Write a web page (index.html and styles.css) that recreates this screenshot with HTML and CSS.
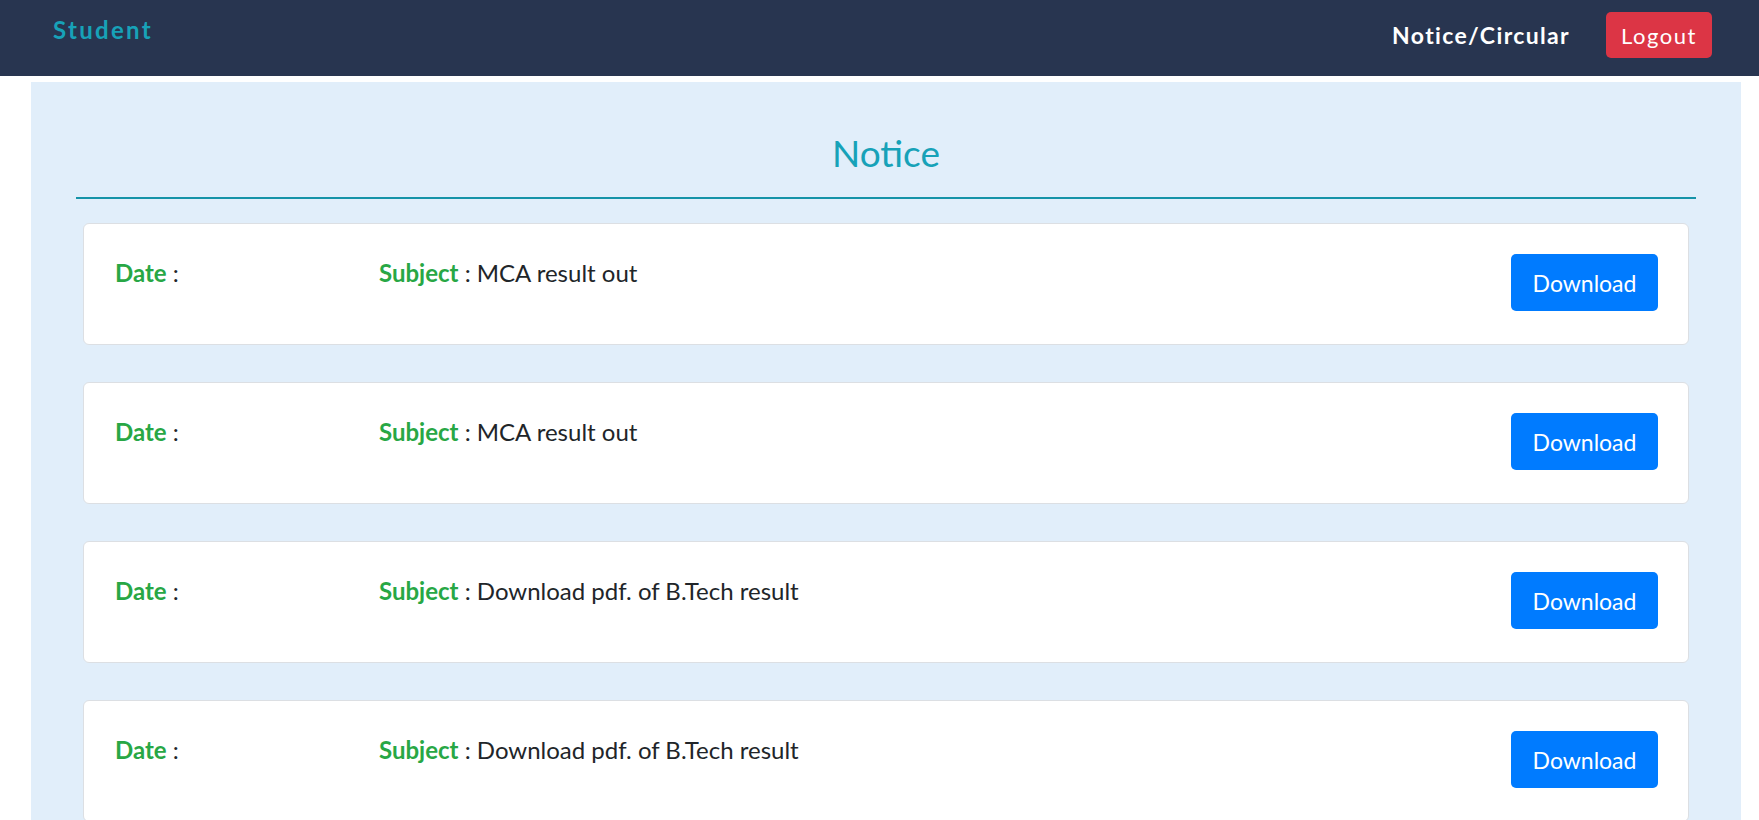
FILE: index.html
```html
<!DOCTYPE html>
<html lang="en">
<head>
<meta charset="utf-8">
<title>Student - Notice</title>
<link rel="stylesheet" href="styles.css">
</head>
<body>
<nav class="navbar">
  <a class="brand" href="#">Student</a>
  <div class="nav-right">
    <a class="nav-link" href="#">Notice/Circular</a>
    <a class="btn-logout" href="#">Logout</a>
  </div>
</nav>
<main class="panel">
  <h1 class="title">Notice</h1>
  <hr class="rule">
  <div class="card">
    <div class="col-date"><span class="label">Date</span> :</div>
    <div class="col-subject"><span class="label">Subject</span> : MCA result out</div>
    <a class="btn-download" href="#">Download</a>
  </div>
  <div class="card">
    <div class="col-date"><span class="label">Date</span> :</div>
    <div class="col-subject"><span class="label">Subject</span> : MCA result out</div>
    <a class="btn-download" href="#">Download</a>
  </div>
  <div class="card">
    <div class="col-date"><span class="label">Date</span> :</div>
    <div class="col-subject"><span class="label">Subject</span> : Download pdf. of B.Tech result</div>
    <a class="btn-download" href="#">Download</a>
  </div>
  <div class="card">
    <div class="col-date"><span class="label">Date</span> :</div>
    <div class="col-subject"><span class="label">Subject</span> : Download pdf. of B.Tech result</div>
    <a class="btn-download" href="#">Download</a>
  </div>
</main>
</body>
</html>
```
FILE: styles.css
```css
* { box-sizing: border-box; }
html, body { margin: 0; padding: 0; }
body {
  font-family: Lato, "Open Sans", "Liberation Sans", sans-serif;
  color: #212529;
  background: #ffffff;
}
a { text-decoration: none; }

.navbar {
  height: 76px;
  background: #283550;
  display: flex;
  justify-content: space-between;
  align-items: flex-start;
  padding: 12px 47px 0 53px;
}
.brand {
  margin-top: 4px;
  font-size: 24px;
  line-height: 1.2;
  font-weight: 700;
  letter-spacing: 2.3px;
  color: #17a2b8;
}
.nav-right {
  display: flex;
  align-items: center;
  height: 46px;
  gap: 36px;
}
.nav-link {
  padding-top: 2px;
  font-size: 23px;
  line-height: 1.2;
  font-weight: 700;
  letter-spacing: 1.35px;
  color: #ffffff;
}
.btn-logout {
  display: block;
  height: 46px;
  width: 106px;
  padding: 11px 0 0;
  text-align: center;
  font-size: 22px;
  line-height: 1.2;
  letter-spacing: 1.5px;
  color: #ffffff;
  background: #dc3545;
  border-radius: 5px;
}

.panel {
  margin: 6px 18px 0 31px;
  background: #e1eefa;
  padding: 49px 45px 40px;
}
.title {
  margin: 0;
  text-align: center;
  font-size: 37px;
  line-height: 1.2;
  font-weight: 400;
  color: #17a2b8;
}
.rule {
  margin: 22px 0 24px;
  border: 0;
  height: 2px;
  background: #1593a8;
}
.card {
  margin: 0 7px 37px;
  height: 122px;
  background: #ffffff;
  border: 1px solid #dcdfe3;
  border-radius: 6px;
  padding: 30px 30px 0 31px;
  display: flex;
  align-items: flex-start;
  font-size: 24px;
  line-height: 1.5;
}
.col-date { width: 264px; padding-top: 1px; }
.col-subject { flex: 1; padding-top: 1px; }
.label { color: #28a745; font-weight: 700; }
.btn-download {
  display: block;
  width: 147px;
  height: 57px;
  padding-top: 12px;
  text-align: center;
  font-size: 23px;
  line-height: 1.5;
  color: #ffffff;
  background: #007bff;
  border-radius: 5px;
}
```
